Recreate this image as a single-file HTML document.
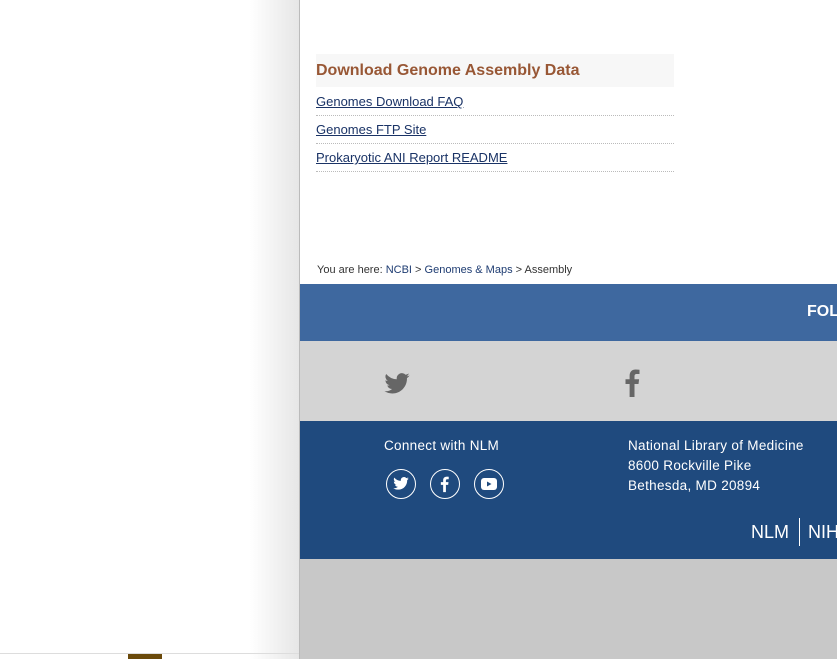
<!DOCTYPE html>
<html><head><style>
body{margin:0;width:837px;height:659px;overflow:hidden;position:relative;background:#fff;font-family:"Liberation Sans",Arial,sans-serif}
.left{position:absolute;left:0;top:0;width:299px;height:659px;background:linear-gradient(to right,#fff 0,#fff 250px,#e6e6e6 299px)}
.line{position:absolute;left:299px;top:0;width:1px;height:659px;background:#bbb}
.right{position:absolute;left:300px;top:0;width:537px;height:659px;background:#fff}
.hd{position:absolute;left:16px;top:54px;width:358px;height:33px;background:#f7f7f7;color:#985735;font-weight:bold;font-size:16px;line-height:33px;}
.lk{position:absolute;left:16px;width:358px;height:27px;border-bottom:1px dotted #bbb;font-size:13px;line-height:27px}
.lk a{color:#1a3366;text-decoration:underline}
.crumb{position:absolute;left:17px;top:264px;font-size:11px;color:#333}
.crumb a{color:#1e3c72;text-decoration:none}
.b1{position:absolute;left:0;top:284px;width:537px;height:57px;background:#3e689f}
.b2{position:absolute;left:0;top:341px;width:537px;height:80px;background:#d4d4d4}
.b3{position:absolute;left:0;top:421px;width:537px;height:138px;background:#1f4a7e;color:#fff;font-size:13.5px;letter-spacing:.3px}
.b4{position:absolute;left:0;top:559px;width:537px;height:100px;background:#c8c8c8}
.c{position:absolute;width:30px;height:30px;border:1.5px solid #fff;border-radius:50%;box-sizing:border-box}
</style></head><body>
<div class="left"></div>
<div style="position:absolute;left:0;top:653px;width:299px;height:1px;background:#ddd"></div>
<div style="position:absolute;left:128px;top:654px;width:34px;height:5px;background:#6b4a0b"></div>
<div class="line"></div>
<div class="right">
<div class="hd">Download Genome Assembly Data</div>
<div class="lk" style="top:88px"><a>Genomes Download FAQ</a></div>
<div class="lk" style="top:116px"><a>Genomes FTP Site</a></div>
<div class="lk" style="top:144px"><a>Prokaryotic ANI Report README</a></div>
<div class="crumb">You are here: <a>NCBI</a> &gt; <a>Genomes &amp; Maps</a> &gt; Assembly</div>
<div class="b1"><div style="position:absolute;left:507px;top:19px;color:#fff;font-weight:bold;font-size:16px">FOL</div></div>
<div class="b2">
<svg style="position:absolute;left:84px;top:32px" width="26" height="21" viewBox="0 0 24 20"><path fill="#666" d="M24 2.4a10 10 0 0 1-2.8.8A4.9 4.9 0 0 0 23.3.5a9.8 9.8 0 0 1-3.1 1.2A4.9 4.9 0 0 0 11.8 6 14 14 0 0 1 1.7.9a4.9 4.9 0 0 0 1.5 6.6A4.9 4.9 0 0 1 1 6.9a4.9 4.9 0 0 0 3.9 4.8 4.9 4.9 0 0 1-2.2.1 4.9 4.9 0 0 0 4.6 3.4A9.9 9.9 0 0 1 0 17.3 14 14 0 0 0 7.5 19.5c9 0 14-7.5 14-14v-.6A10 10 0 0 0 24 2.4z"/></svg>
<svg style="position:absolute;left:324px;top:27px" width="16" height="29" viewBox="0 0 16 29"><path fill="#666" d="M10.5 29V16h4l.6-4.8h-4.6V8.3c0-1.4.4-2.3 2.4-2.3H15.5V1.7A33 33 0 0 0 11.7 1.5C8 1.5 5.6 3.7 5.6 7.9v3.3H1.5V16h4.1v13z"/></svg>
</div>
<div class="b3">
<div style="position:absolute;left:84px;top:17px">Connect with NLM</div>
<div class="c" style="left:86px;top:48px"><svg style="position:absolute;left:6px;top:7px" width="16" height="13" viewBox="0 0 24 20"><path fill="#fff" d="M24 2.4a10 10 0 0 1-2.8.8A4.9 4.9 0 0 0 23.3.5a9.8 9.8 0 0 1-3.1 1.2A4.9 4.9 0 0 0 11.8 6 14 14 0 0 1 1.7.9a4.9 4.9 0 0 0 1.5 6.6A4.9 4.9 0 0 1 1 6.9a4.9 4.9 0 0 0 3.9 4.8 4.9 4.9 0 0 1-2.2.1 4.9 4.9 0 0 0 4.6 3.4A9.9 9.9 0 0 1 0 17.3 14 14 0 0 0 7.5 19.5c9 0 14-7.5 14-14v-.6A10 10 0 0 0 24 2.4z"/></svg></div>
<div class="c" style="left:130px;top:48px"><svg style="position:absolute;left:9px;top:5px" width="9" height="18" viewBox="0 0 16 29"><path fill="#fff" d="M10.5 29V16h4l.6-4.8h-4.6V8.3c0-1.4.4-2.3 2.4-2.3H15.5V1.7A33 33 0 0 0 11.7 1.5C8 1.5 5.6 3.7 5.6 7.9v3.3H1.5V16h4.1v13z"/></svg></div>
<div class="c" style="left:174px;top:48px"><svg style="position:absolute;left:6px;top:8px" width="16" height="12" viewBox="0 0 16 12"><rect x="0" y="0" width="16" height="12" rx="3" fill="#fff"/><path d="M6 3.5v5l4.5-2.5z" fill="#1f4a7e"/></svg></div>
<div style="position:absolute;left:328px;top:15px;line-height:20px">National Library of Medicine<br>8600 Rockville Pike<br>Bethesda, MD 20894</div>
<div style="position:absolute;left:451px;top:101px;font-size:18px;letter-spacing:0">NLM</div>
<div style="position:absolute;left:499px;top:97px;width:1px;height:28px;background:#fff"></div>
<div style="position:absolute;left:508px;top:101px;font-size:18px;letter-spacing:0">NIH</div>
</div>
<div class="b4"></div>
</div>
</body></html>
